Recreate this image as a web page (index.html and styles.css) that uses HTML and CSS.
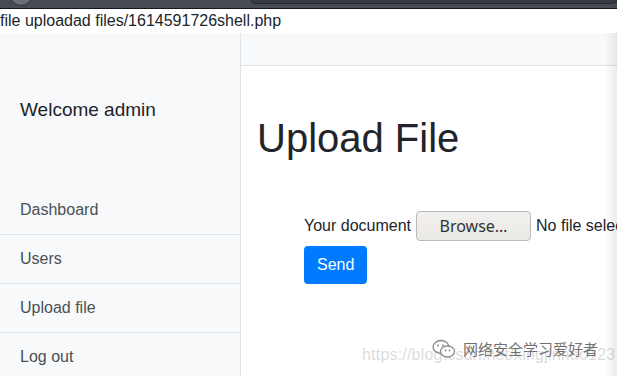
FILE: index.html
```html
<!DOCTYPE html>
<html>
<head>
<meta charset="utf-8">
<link rel="stylesheet" href="styles.css">
</head>
<body>
<div class="chrome"><span class="chrome-dot"></span><span class="chrome-bar"></span></div>
<div class="msg">file uploadad files/1614591726shell.php</div>
<div class="layout">
  <aside class="sidebar">
    <div class="sidebar-heading">Welcome admin</div>
    <nav class="nav">
      <a class="nav-item">Dashboard</a>
      <a class="nav-item">Users</a>
      <a class="nav-item">Upload file</a>
      <a class="nav-item">Log out</a>
    </nav>
  </aside>
  <main class="main">
    <div class="topbar"></div>
    <h1 class="title">Upload File</h1>
    <form class="form">
      <div class="row">
        <span class="label">Your document</span>
        <span class="browse">Browse…</span>
        <span class="nofile">No file selected.</span>
      </div>
      <span class="send">Send</span>
    </form>
  </main>
</div>
<div class="watermark">
  <div class="wm-url">https://blog.csdn.net/xingjinhao123</div>
  <div class="wm-brand">
    <svg class="wm-icon" width="24" height="20" viewBox="0 0 24 20">
      <ellipse cx="9" cy="8" rx="8" ry="6.5" fill="none" stroke="#8a8a8a" stroke-width="1.3"/>
      <ellipse cx="15.5" cy="12.5" rx="7" ry="5.5" fill="#fff" stroke="#8a8a8a" stroke-width="1.3"/>
      <circle cx="6" cy="6.5" r="1" fill="#8a8a8a"/>
      <circle cx="11" cy="6.5" r="1" fill="#8a8a8a"/>
      <circle cx="13.5" cy="11.5" r="0.9" fill="#8a8a8a"/>
      <circle cx="17.5" cy="11.5" r="0.9" fill="#8a8a8a"/>
    </svg>
    <span class="wm-text">网络安全学习爱好者</span>
  </div>
</div>
<div class="edge-shadow"></div>
</body>
</html>
```
FILE: styles.css
```css
html, body {
  margin: 0;
  padding: 0;
  background: #fff;
  overflow: hidden;
  height: 376px;
}
body {
  font-family: "Liberation Sans", Arial, sans-serif;
  color: #212529;
  position: relative;
}
.chrome {
  height: 8px;
  background: #464a53;
  border-bottom: 1px solid #15171b;
  position: relative;
  overflow: hidden;
}
.chrome-dot {
  position: absolute;
  left: 9px;
  top: -18px;
  width: 22px;
  height: 22px;
  border-radius: 50%;
  background: #6a6d72;
  border: 1px solid #2b2d31;
}
.chrome-bar {
  position: absolute;
  left: 251px;
  right: 0;
  top: -6px;
  height: 8px;
  border-radius: 4px;
  background: #383b43;
  border: 1px solid #25272c;
}
.msg {
  font-size: 16px;
  line-height: 24px;
  height: 24px;
  white-space: nowrap;
  color: #212529;
}
.layout {
  display: flex;
  height: 343px;
}
.sidebar {
  width: 240px;
  flex: none;
  background: #f8f9fa;
  border-right: 1px solid #dee2e6;
}
.sidebar-heading {
  font-size: 19px;
  padding: 66px 20px 0;
  height: 87px;
  line-height: 22px;
}
.nav {
  display: flex;
  flex-direction: column;
}
.nav-item {
  display: block;
  height: 48px;
  line-height: 48px;
  padding: 0 20px;
  font-size: 16px;
  color: #495057;
  border-bottom: 1px solid #dee2e6;
}
.main {
  flex: 1;
  min-width: 0;
  overflow: hidden;
}
.topbar {
  height: 32px;
  background: #f8f9fa;
  border-bottom: 1px solid #dee2e6;
}
.title {
  margin: 48px 0 0 16px;
  font-size: 40px;
  font-weight: 400;
  line-height: 48px;
  color: #212529;
}
.form {
  margin: 49px 0 0 63px;
}
.row {
  display: flex;
  align-items: center;
  white-space: nowrap;
  height: 30px;
  font-size: 16px;
}
.label {
  margin-right: 5px;
}
.browse {
  flex: none;
  box-sizing: border-box;
  width: 115px;
  height: 30px;
  line-height: 28px;
  text-align: center;
  border: 1px solid #bcb8b2;
  border-radius: 4px;
  background: linear-gradient(#f1f0ee, #ebe9e6);
  font-family: "Noto Sans", "DejaVu Sans", sans-serif;
  font-size: 16px;
  color: #2e3436;
  margin-right: 5px;
}
.nofile {
  flex: none;
}
.send {
  display: inline-block;
  margin-top: 5px;
  box-sizing: border-box;
  height: 38px;
  line-height: 38px;
  padding: 0 13px;
  background: #007bff;
  color: #fff;
  border-radius: 4px;
  font-size: 16px;
}
.watermark {
  position: absolute;
  left: 362px;
  top: 336px;
  width: 245px;
  height: 30px;
}
.wm-url {
  position: absolute;
  left: 0;
  top: 10px;
  font-size: 16px;
  color: rgba(190, 190, 190, 0.55);
  white-space: nowrap;
  letter-spacing: 0.2px;
}
.wm-brand {
  position: absolute;
  left: 70px;
  top: 2px;
  display: flex;
  align-items: center;
  gap: 7px;
}
.wm-text {
  font-family: "Noto Sans CJK SC", sans-serif;
  font-size: 15px;
  color: #707070;
  white-space: nowrap;
  text-shadow: 0 0 1px #fff;
}
.edge-shadow {
  position: absolute;
  right: 0;
  top: 33px;
  bottom: 0;
  width: 12px;
  background: linear-gradient(to right, rgba(0,0,0,0), rgba(0,0,0,0.08));
}
```
